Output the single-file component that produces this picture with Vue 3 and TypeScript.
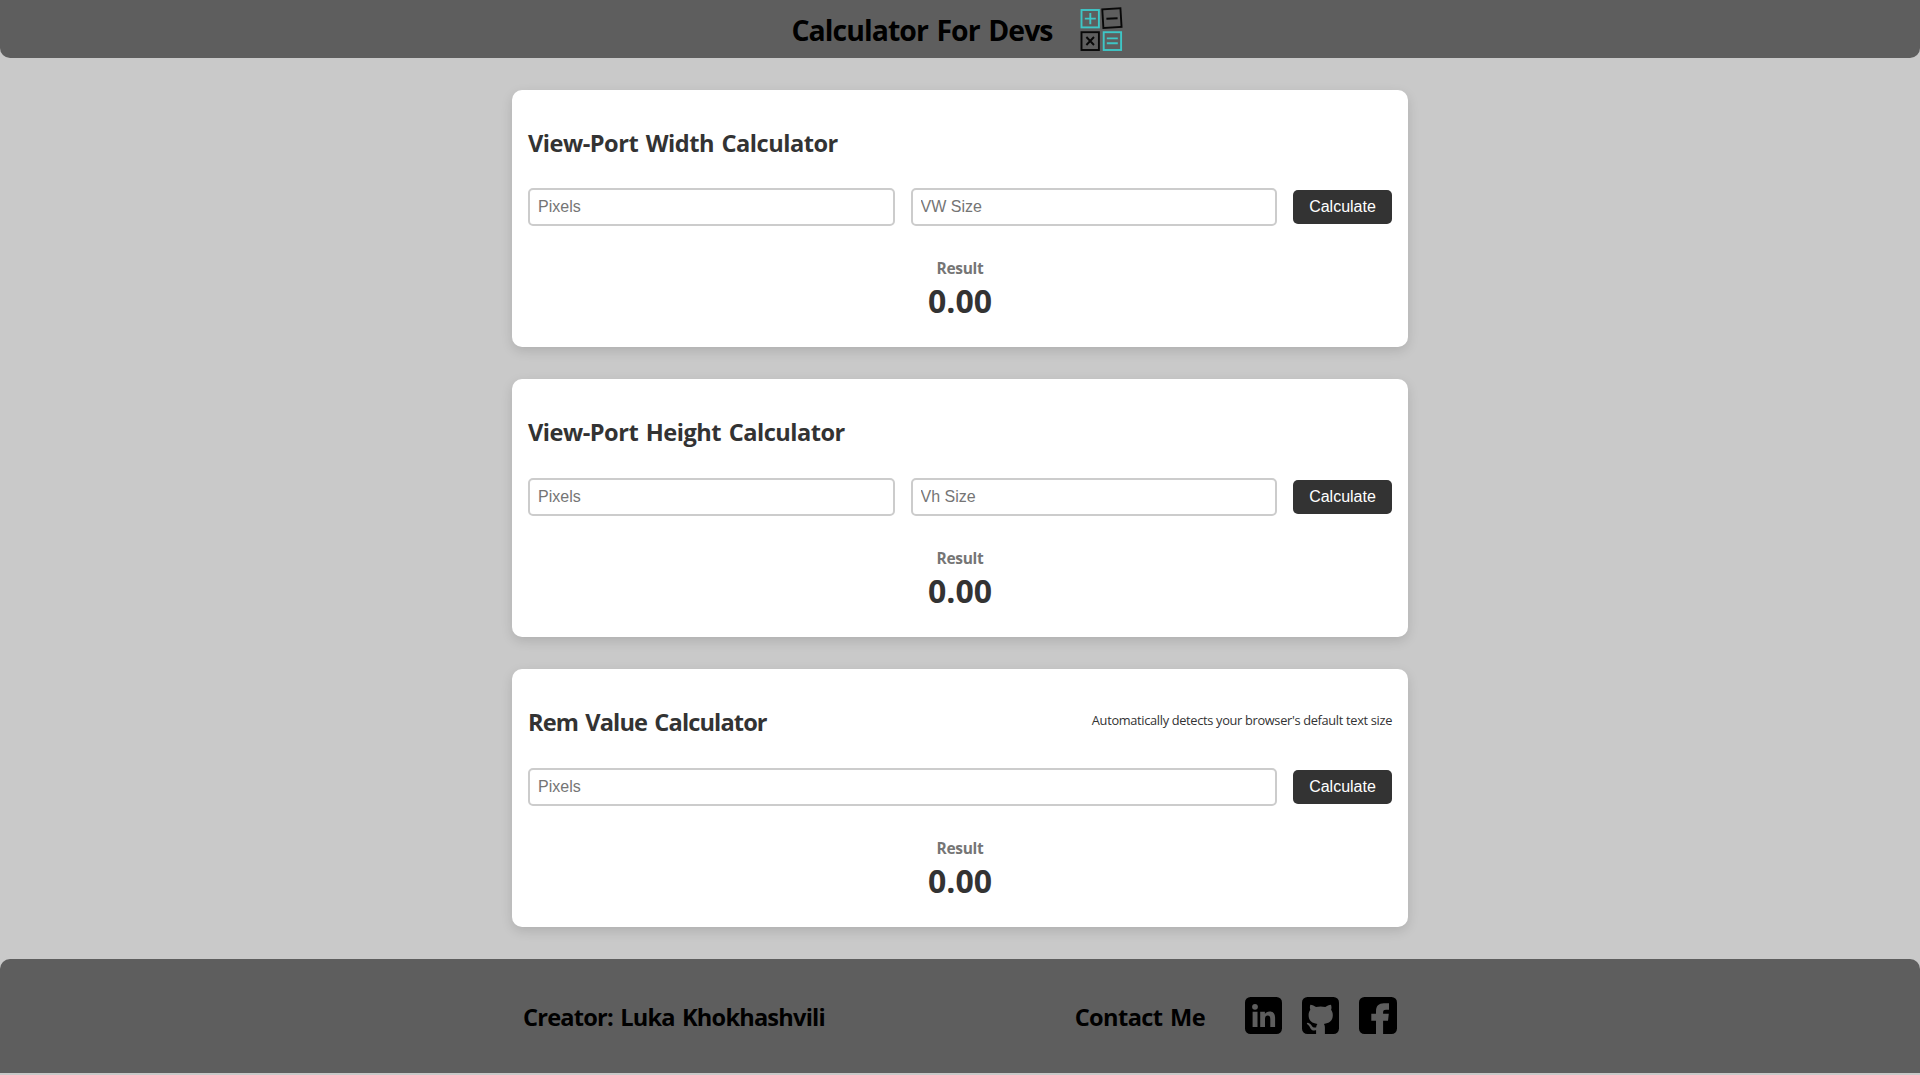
<script setup lang="ts">
import { reactive } from 'vue'

interface Field {
  placeholder: string
  value: string
}

interface Calculator {
  id: string
  title: string
  note?: string
  fields: Field[]
  result: string
}

const calculators = reactive<Calculator[]>([
  {
    id: 'vw',
    title: 'View-Port Width Calculator',
    fields: [
      { placeholder: 'Pixels', value: '' },
      { placeholder: 'VW Size', value: '' },
    ],
    result: '0.00',
  },
  {
    id: 'vh',
    title: 'View-Port Height Calculator',
    fields: [
      { placeholder: 'Pixels', value: '' },
      { placeholder: 'Vh Size', value: '' },
    ],
    result: '0.00',
  },
  {
    id: 'rem',
    title: 'Rem Value Calculator',
    note: "Automatically detects your browser's default text size",
    fields: [{ placeholder: 'Pixels', value: '' }],
    result: '0.00',
  },
])

function calculate(calc: Calculator): void {
  const pixels = Number(calc.fields[0].value)
  const rootSize = parseFloat(getComputedStyle(document.documentElement).fontSize)
  const value = calc.id === 'rem' ? pixels / rootSize : (pixels / Number(calc.fields[1].value)) * 100
  calc.result = Number.isFinite(value) ? value.toFixed(2) : '0.00'
}
</script>

<template>
  <div class="page">
    <header class="header">
      <h1 class="brand">Calculator For Devs</h1>
      <svg class="logo" viewBox="0 0 44 46" fill="none" stroke-width="1.9" aria-hidden="true">
        <g stroke="#3ec6c6">
          <rect x="1.5" y="3" width="17.4" height="17.4" />
          <path d="M4.8 11.6h11M10.3 6v11.2" />
          <rect x="23.7" y="25.2" width="17.4" height="17.8" />
          <path d="M26.8 31.4h11M26.8 36.2h11" />
        </g>
        <g stroke="#080808">
          <rect x="22.8" y="1.8" width="18.2" height="18.6" transform="rotate(-3.5 32 11)" />
          <path d="M26.4 11.8l11.2-.6" />
          <rect x="1.5" y="25.2" width="17.4" height="17.8" />
          <path d="M6.4 30l7.6 8M14 30l-7.6 8" />
        </g>
      </svg>
    </header>

    <main class="calculators">
      <section v-for="calc in calculators" :key="calc.id" class="card">
        <div class="card-head">
          <h2 class="title" :class="{ tight: calc.note }">{{ calc.title }}</h2>
          <p v-if="calc.note" class="note">{{ calc.note }}</p>
        </div>
        <form class="row" @submit.prevent="calculate(calc)">
          <input
            v-for="field in calc.fields"
            :key="field.placeholder"
            v-model="field.value"
            class="field"
            :placeholder="field.placeholder"
          />
          <button class="button" type="submit">Calculate</button>
        </form>
        <div class="result">
          <span class="label">Result</span>
          <span class="value">{{ calc.result }}</span>
        </div>
      </section>
    </main>

    <footer class="footer">
      <div class="footer-inner">
        <h2 class="creator tight">Creator: Luka Khokhashvili</h2>
        <div class="contact">
          <h2 class="contact-title">Contact Me</h2>
          <a class="social" aria-label="LinkedIn">
            <svg viewBox="0 0 37 37" width="37" height="37">
              <rect width="37" height="37" rx="5.5" />
              <g fill="#5e5e5e">
                <circle cx="10" cy="9.8" r="2.9" />
                <path d="M7.6 14.8h4.9V30H7.6zM15.2 14.8h4.7v2.1c.9-1.5 2.5-2.5 4.6-2.5 4.5 0 5.6 2.9 5.6 7V30h-4.8v-7.5c0-2-.2-3.9-2.6-3.9s-2.7 1.9-2.7 3.9V30h-4.8z" />
              </g>
            </svg>
          </a>
          <a class="social" aria-label="GitHub">
            <svg viewBox="0 0 37 37" width="37" height="37">
              <rect width="37" height="37" rx="5.5" />
              <path
                fill="#5e5e5e"
                d="M8.3 7.7c2.2.2 4 1.1 5.7 2.2 3-.7 6.3-.7 9.3 0 1.7-1.1 3.5-2 5.7-2.2.7 2 .6 3.7.1 5.1 1.1 1.5 1.7 3.2 1.7 5.2 0 5.7-3.2 8.1-8.9 8.9.7.9 1 2 1 3.5V37h-8.8v-3.7c-4.9.9-5.6-2.2-6.6-3.9-.7-1.2-1.6-1.9-2.5-2.5-.5-.8.3-1.3 1.5-1 3.4.8 3.1 5.6 7.6 4.5.2-1.5.6-2.6 1.3-3.5-5.6-.8-8.8-3.2-8.8-8.900 0-2 .6-3.700 1.700-5.200-.5-1.400-.6-3.100 0-5.100z"
              />
            </svg>
          </a>
          <a class="social" aria-label="Facebook">
            <svg viewBox="0 0 38 37" width="38" height="37">
              <rect width="38" height="37" rx="5.5" />
              <path
                fill="#5e5e5e"
                d="M17 37V23.7h-4.7v-6.9H17v-2.6c0-5.2 2.8-7.9 7.8-7.9H30v6.5h-3c-2 0-2.9.8-2.9 2.5v1.5h5.7l-.8 6.9h-4.9V37z"
              />
            </svg>
          </a>
        </div>
      </div>
    </footer>
  </div>
</template>

<style>
body {
  background: #c9c9c9;
}
</style>

<style scoped>
.page {
  height: 1075px;
  overflow: hidden;
  box-sizing: border-box;
  background: #c9c9c9;
  color: #000;
  font-family: 'Segoe UI', 'Open Sans', 'Noto Sans', sans-serif;
}

h1,
h2,
p {
  margin: 0;
}

.header {
  height: 57.6px;
  box-sizing: border-box;
  padding: 2px 5px 0 0;
  display: flex;
  align-items: center;
  justify-content: center;
  gap: 27px;
  background: #5e5e5e;
  border-radius: 0 0 10px 10px;
}

.brand {
  font-size: 28.4px;
  line-height: 40px;
  letter-spacing: -0.92px;
  word-spacing: 2px;
  white-space: nowrap;
}

.logo {
  width: 44px;
  height: 46px;
}

.calculators {
  width: 896px;
  margin: 32px auto 0;
  display: flex;
  flex-direction: column;
  gap: 32px;
}

.card {
  height: 257.8px;
  box-sizing: border-box;
  padding: 35px 16px 0;
  background: #fff;
  border-radius: 10px;
  box-shadow: 0 4px 12px rgba(0, 0, 0, 0.13);
}

.card-head {
  height: 63.6px;
  display: flex;
  justify-content: space-between;
}

.title,
.creator,
.contact-title {
  font-size: 23.6px;
  line-height: 36px;
  letter-spacing: -0.5px;
  word-spacing: 2px;
  white-space: nowrap;
}

.title,
.value {
  color: #333;
}

.title.tight {
  letter-spacing: -0.88px;
}

.creator.tight {
  letter-spacing: -0.8px;
}

.note {
  color: #333;
  font-size: 12.8px;
  line-height: 32px;
  letter-spacing: -0.32px;
  white-space: nowrap;
}

.row {
  height: 38px;
  display: flex;
  align-items: center;
  gap: 16px;
}

.field {
  flex: 1;
  min-width: 0;
  height: 38px;
  box-sizing: border-box;
  padding: 0 8px;
  border: 2px solid #ccc;
  border-radius: 5px;
  outline: none;
  font: 16px 'Liberation Sans', Arial, sans-serif;
}

.field::placeholder {
  color: #757575;
}

.button {
  width: 99px;
  height: 34px;
  padding: 0;
  border: 0;
  border-radius: 5px;
  background: #333;
  color: #fff;
  font: 16px 'Liberation Sans', Arial, sans-serif;
}

.result {
  display: flex;
  flex-direction: column;
  align-items: center;
  padding-top: 32px;
  font-weight: 700;
}

.label {
  color: #757575;
  font-size: 15.5px;
  line-height: 21px;
  letter-spacing: -0.3px;
}

.value {
  font-size: 32px;
  line-height: 44px;
}

.footer {
  height: 114px;
  margin-top: 32px;
  background: #5e5e5e;
  border-radius: 10px 10px 0 0;
}

.footer-inner {
  width: 874px;
  height: 114px;
  margin: 0 auto;
  display: flex;
  align-items: center;
  justify-content: space-between;
}

.creator,
.contact-title {
  padding-top: 3px;
}

.contact {
  display: flex;
  align-items: center;
  gap: 20px;
}

.contact-title {
  margin-right: 20px;
  letter-spacing: -0.6px;
}

.social {
  display: flex;
}
</style>
